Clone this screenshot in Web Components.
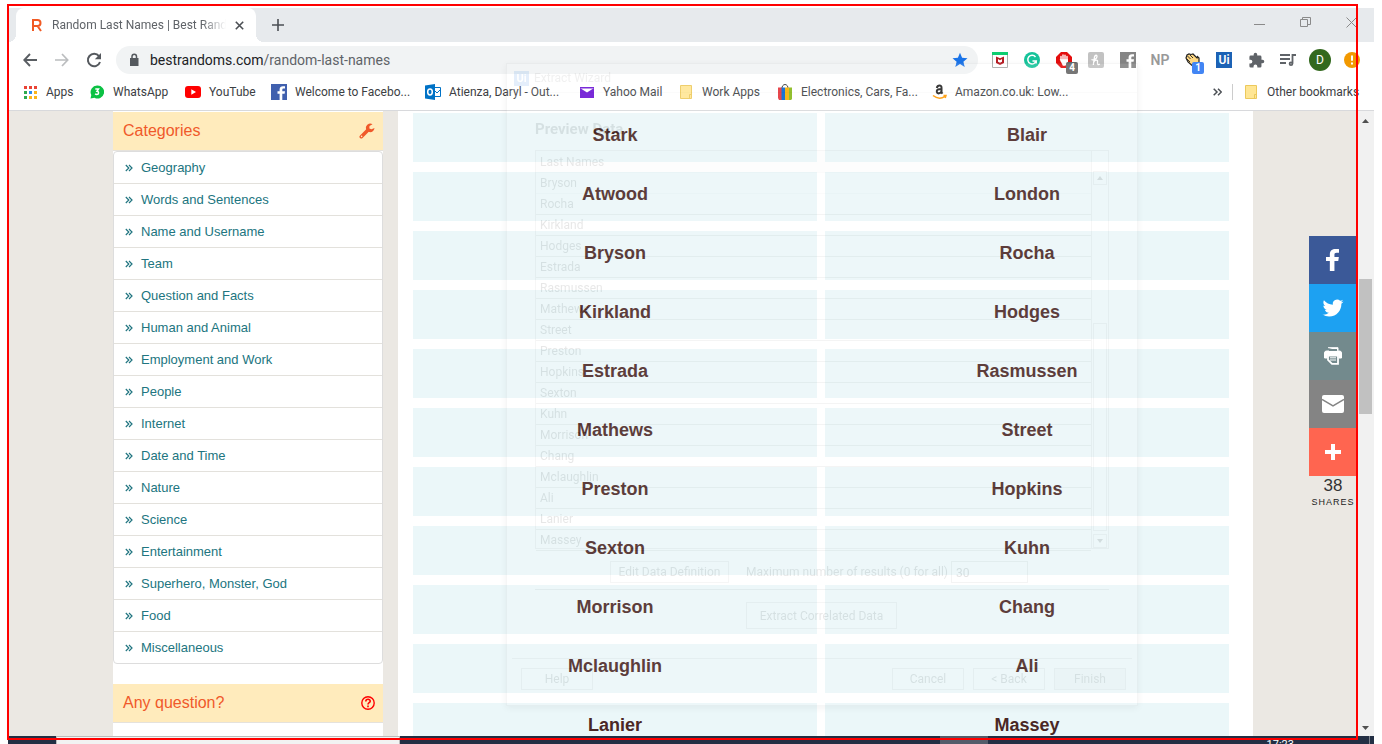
<!DOCTYPE html>
<html lang="en">
<head>
<meta charset="utf-8">
<title>Random Last Names | Best Randoms</title>
<style>
body{margin:0;background:#fff;font-family:Roboto,"Noto Sans",sans-serif;font-size:12px;color:#3c4043}
</style>
</head>
<body>
<desktop-view></desktop-view>
<script>
const BASE = `*,:host{box-sizing:border-box}button{font:inherit;color:inherit;background:none;border:0;padding:0;margin:0}
a{color:inherit;text-decoration:none}ul{list-style:none;margin:0;padding:0}svg{display:block}`;
function define(name, css, html) {
  customElements.define(name, class extends HTMLElement {
    constructor() {
      super();
      const t = document.createElement('template');
      t.innerHTML = `<style>${BASE}${css}</style>${html}`;
      this.attachShadow({ mode: 'open' }).append(t.content.cloneNode(true));
    }
  });
}

define('tab-strip', `
:host{display:flex;height:34px;background:#e7eaed;padding-left:8px;align-items:stretch;flex:none}
.tab{display:flex;align-items:center;width:240px;background:#fff;border-radius:8px 8px 0 0;padding:0 8px 0 13px;position:relative}
.tab::after{content:"";position:absolute;left:100%;bottom:0;width:8px;height:8px;background:radial-gradient(circle at 100% 0,transparent 8px,#fff 8px)}
.tab::before{content:"";position:absolute;right:100%;bottom:0;width:8px;height:8px;background:radial-gradient(circle at 0 0,transparent 8px,#fff 8px)}
.title{flex:1;margin-left:7px;overflow:hidden;white-space:nowrap;color:#5f6368;-webkit-mask-image:linear-gradient(90deg,#000 86%,transparent)}
.tab button{width:17px;height:17px;margin-left:5px;display:grid;place-items:center}
.new{width:28px;margin-left:8px;display:grid;place-items:center}
.ctl{margin-left:auto;display:flex}
.ctl button{width:46px;height:28px;display:grid;place-items:center}`,
`<div class="tab"><svg width="16" height="16" viewBox="0 0 16 16" fill="none" stroke="#f15a24" stroke-width="2"><path d="M4 14V3h4.500a3 3 0 0 1 0 6H4M8.500 9l3.500 5"/></svg>
<span class="title">Random Last Names | Best Randoms</span>
<button aria-label="Close tab"><svg width="9" height="9" viewBox="0 0 9 9" stroke="#4b4f54" stroke-width="1.600"><path d="M.8.8l7.400 7.400M8.200.8L.8 8.200"/></svg></button></div>
<button class="new" aria-label="New tab"><svg width="12" height="12" viewBox="0 0 12 12" stroke="#4b4f54" stroke-width="1.600"><path d="M6 0v12M0 6h12"/></svg></button>
<div class="ctl">
<button aria-label="Minimize"><svg width="11" height="11" stroke="#8a8a8a"><path d="M0 7.500h11"/></svg></button>
<button aria-label="Restore"><svg width="11" height="11" fill="none" stroke="#8a8a8a"><path d="M.5 2.500h7v7h-7zM2.500 2.500v-2h8v7h-3"/></svg></button>
<button aria-label="Close"><svg width="11" height="11" stroke="#8a8a8a"><path d="M.5.5l10 10M10.500.5l-10 10"/></svg></button></div>`);

define('tool-bar', `
:host{display:flex;height:36px;align-items:center;padding:0 6px;background:#fff;flex:none}
button{width:32px;height:32px;display:grid;place-items:center;position:relative;flex:none}
.pill{flex:1;height:28px;margin:0 6px;border-radius:14px;background:#f1f3f4;display:flex;align-items:center;padding-left:11px;min-width:0}
.url{flex:1;margin-left:9px;font-size:14px;white-space:nowrap;color:#5f6368}
.url b{font-weight:400;color:#202124}
.pill button{width:24px;margin-right:6px}
.badge{position:absolute;left:18px;top:18px;min-width:12px;height:12px;border-radius:2px;background:#666;color:#fff;font-size:10px;line-height:12px;font-weight:700;text-align:center}
.blue{background:#4285f4;left:16px}
.sq{width:16px;height:16px;background:#1c62b5;color:#fff;font-size:12px;line-height:16px;font-weight:600}
.np{color:#999;font-size:14px;font-family:Roboto,sans-serif;font-weight:600}
.av{width:22px;height:22px;border-radius:50%;background:#33691e;color:#fff;font-size:12px;line-height:22px}`,
`<button aria-label="Back"><svg width="14" height="14" viewBox="0 0 14 14" fill="none" stroke="#5a5e63" stroke-width="1.900"><path d="M14 7H1.500M7 1L1.300 7 7 13"/></svg></button>
<button aria-label="Forward"><svg width="14" height="14" viewBox="0 0 14 14" fill="none" stroke="#bbbdbf" stroke-width="1.700"><path d="M0 7h12.500M7 1l5.700 6L7 13"/></svg></button>
<button aria-label="Reload"><svg width="16" height="16" viewBox="0 0 16 16"><path d="M13 4.200A6.200 6.200 0 1 0 14 10" fill="none" stroke="#55595e" stroke-width="2"/><path d="M15 1v6.200H8.800z" fill="#55595e"/></svg></button>
<div class="pill"><svg width="14" height="14" viewBox="0 0 14 14"><path d="M3 5h8.500v8H3z" fill="#55595e"/><path d="M5 6V3.500a2.250 2.250 0 0 1 4.500 0V6" fill="none" stroke="#55595e" stroke-width="1.500"/></svg>
<span class="url"><b>bestrandoms.com</b>/random-last-names</span>
<button aria-label="Bookmark"><svg width="16" height="16" viewBox="0 0 16 16"><path d="M8 .8l2.100 5 5.400.4-4.100 3.500 1.300 5.200L8 12.100l-4.700 2.800 1.300-5.200L.5 6.200l5.400-.4z" fill="#1a73e8"/></svg></button></div>
<button aria-label="Web advisor"><svg width="16" height="16" viewBox="0 0 16 16"><path d="M.5 2.500h15v13H.5z" fill="#fff" stroke="#aaa"/><path d="M0 0h16v3H0z" fill="#0fcd71"/><path d="M4 4.500l4 1.800 4-1.800v6.500l-4 2L4 11z" fill="#b81c24"/><path d="M6 7l2 1.200L10 7v2.800l-2 1-2-1z" fill="#fff"/></svg></button>
<button aria-label="Grammar"><svg width="16" height="16" viewBox="0 0 16 16"><circle cx="8" cy="8" r="8" fill="#15c39a"/><path d="M11.500 5A4.300 4.300 0 1 0 12.200 9H8.500M12.200 8.500v3" fill="none" stroke="#fff" stroke-width="1.500"/></svg></button>
<button aria-label="Ad block"><svg width="16" height="16" viewBox="0 0 16 16"><path d="M5 0h6l5 5v6l-5 5H5l-5-5V5z" fill="#e40d0d"/><path d="M5 9V4.500M7 8V3M9 8V3.200M11 9V4.500M4.800 8h6.500v2L9 13H7.300z" fill="#fff" stroke="#fff" stroke-width="1.400" stroke-linecap="round"/></svg><span class="badge">4</span></button>
<button aria-label="Coupons"><svg width="16" height="16" viewBox="0 0 16 16"><rect width="16" height="16" rx="2" fill="#c2c2c2"/><path d="M3.500 7.500C5 8.500 9 7 9 4.500c0-2-2-1.500-2.500.5L5.300 13M6 9.500c1.500-2 4-2 3.500.5-.4 2 .5 3.500 2.300 2" fill="none" stroke="#fff" stroke-width="1.300"/></svg></button>
<button aria-label="Facebook"><svg width="16" height="16" viewBox="0 0 16 16"><path d="M0 0h16v16H0z" fill="#858585"/><path d="M8.600 16V9.800H6.500V7.300h2.100V5.500C8.600 3.300 10 2.200 12 2.200h2v2.400h-1.300c-1 0-1.400.4-1.400 1.300v1.400H14l-.4 2.500h-2.300V16z" fill="#fff"/></svg></button>
<button class="np">NP</button>
<button aria-label="Wave"><svg width="17" height="17" viewBox="0 0 17 17"><path d="M2 6L3 3l2-1 2 .5L9 2l4 4 .5-1.500L15 6v4l-3 4-4-.5-4-3.500z" fill="#ffd882" stroke="#222" stroke-width="1.200"/><path d="M3.500 4l3 3M6 3l3 3M3 7l3 3" stroke="#222" stroke-width=".9"/></svg><span class="badge blue">1</span></button>
<button aria-label="UiPath"><span class="sq">Ui</span></button>
<button aria-label="Extensions"><svg width="17" height="17" viewBox="0 0 24 24"><path d="M20.500 11H19V7a2 2 0 0 0-2-2h-4V3.500a2.500 2.500 0 0 0-5 0V5H4a2 2 0 0 0-2 2v3.800h1.500a2.700 2.700 0 0 1 0 5.400H2V20a2 2 0 0 0 2 2h3.800v-1.500a2.700 2.700 0 0 1 5.400 0V22H17a2 2 0 0 0 2-2v-4h1.500a2.500 2.500 0 0 0 0-5z" fill="#5f6368"/></svg></button>
<button aria-label="Media"><svg width="16" height="14" viewBox="0 0 16 14" fill="none" stroke="#5f6368" stroke-width="1.800"><path d="M0 2h10M0 6h10M0 10h6M16 2h-3.500v8.500"/><circle cx="11" cy="10.800" r="1.400"/></svg></button>
<button aria-label="Profile"><span class="av">D</span></button>
<button aria-label="Update"><svg width="16" height="16" viewBox="0 0 16 16"><circle cx="8" cy="8" r="8" fill="#f29900"/><path d="M8 3.500v5.300M8 10.500v2" stroke="#fff" stroke-width="2"/></svg></button>`);

define('bookmark-item', `
:host{display:block;min-width:0}
a{display:flex;align-items:center;gap:8px;height:28px;white-space:nowrap}
.i{width:16px;height:16px;flex:none;display:grid;place-items:center}`,
`<a href="#"><span class="i"><slot name="icon"></slot></span><slot></slot></a>`);

const folder = `<svg slot="icon" width="12" height="14" viewBox="0 0 12 14"><path d="M.5.5h11v13H.5z" fill="#ffe694" stroke="#ecc95c"/><path d="M9.500 13.500v-4h2" fill="none" stroke="#ecc95c"/></svg>`;
define('bookmarks-bar', `
:host{display:grid;grid-template-columns:67px 96px 86px 154px 154px 99px 99px 154px 1fr 30px 131px;padding:0 0 4px 14px;height:33px;background:#fff;border-bottom:1px solid #d8d9dc;flex:none}
.more{height:28px;display:flex;align-items:center;color:#4b4f54}
.more::after{content:"";height:16px;border-left:1px solid #ccc;margin-left:10px}`,
`<bookmark-item><svg slot="icon" width="13" height="13" viewBox="0 0 13 13"><path d="M0 0h3v3H0zM5 0h3v3H5zM10 0h3v3h-3zM0 5h3v3H0z" fill="#ea4335"/><path d="M5 5h3v3H5z" fill="#2a8cf0"/><path d="M10 5h3v3h-3zM5 10h3v3H5zM10 10h3v3h-3z" fill="#fbb51b"/><path d="M0 10h3v3H0zM0 5h3v3H0z" fill="#2da94f"/></svg>Apps</bookmark-item>
<bookmark-item><svg slot="icon" width="14" height="14" viewBox="0 0 14 14"><path d="M7.500 .5a6.500 6.500 0 1 1-3 12.200L.5 13.500l.8-3.600A6.500 6.500 0 0 1 7.500.5z" fill="#0bc143"/><path d="M5.300 4h3.200L7 6.300c2.300.2 2 3.300-.2 3.200Q5.800 9.500 5.200 8.800" fill="none" stroke="#fff" stroke-width="1.500"/></svg>WhatsApp</bookmark-item>
<bookmark-item><svg slot="icon" width="16" height="12" viewBox="0 0 16 12"><rect width="16" height="12" rx="3" fill="#f00"/><path d="M6.300 3.300v5.400L11 6z" fill="#fff"/></svg>YouTube</bookmark-item>
<bookmark-item><svg slot="icon" width="16" height="16" viewBox="0 0 16 16"><path d="M0 0h16v16H0z" fill="#4060ae"/><path d="M8.600 16V9.800H6.500V7.300h2.100V5.500C8.600 3.300 10 2.200 12 2.200h2v2.400h-1.300c-1 0-1.400.4-1.400 1.300v1.400H14l-.4 2.500h-2.300V16z" fill="#fff"/></svg>Welcome to Facebo...</bookmark-item>
<bookmark-item><svg slot="icon" width="16" height="16" viewBox="0 0 16 16"><path d="M9 3.500h6.500v9H9M9 6l3 3 3.500-3.500" fill="#fff" stroke="#0072c6"/><path d="M0 1.500L10 0v16L0 14.500z" fill="#0072c6"/><ellipse cx="5" cy="8" rx="2.300" ry="2.900" fill="none" stroke="#fff" stroke-width="1.500"/></svg>Atienza, Daryl - Out...</bookmark-item>
<bookmark-item><svg slot="icon" width="14" height="11" viewBox="0 0 14 11"><path d="M0 0h14v11H0z" fill="#6a12d4"/><path d="M0 1l7 4.500L14 1V0H0z" fill="#fff"/><path d="M0 0h14v1.500H0z" fill="#6a12d4"/></svg>Yahoo Mail</bookmark-item>
<bookmark-item>${folder}Work Apps</bookmark-item>
<bookmark-item><svg slot="icon" width="14" height="16" viewBox="0 0 14 16"><path d="M4 5C3.500-1 10.500-1 10 5" fill="none" stroke="#333"/><path d="M0 3.500h4V16H1L0 14z" fill="#e53238"/><path d="M3.500 3.500H7V16H3.500z" fill="#0064d2"/><path d="M7 3.500h4V16H7z" fill="#f5af02"/><path d="M11 3.500h3V15l-1 1h-2z" fill="#86b817"/></svg>Electronics, Cars, Fa...</bookmark-item>
<bookmark-item><svg slot="icon" width="15" height="16" viewBox="0 0 15 16"><path d="M4.800 4C5.500.8 10 .8 9.500 4v4.500l1 1.200M9.500 5C6 5 4.500 6 4.800 7.800c.4 2.400 4.200 2 4.700-1" fill="none" stroke="#222" stroke-width="2"/><path d="M1 11.500c4 3.200 8.500 3.200 12 .8M11.500 11.500h2.500l-.8 2.500" fill="none" stroke="#f90" stroke-width="1.500"/></svg>Amazon.co.uk: Low...</bookmark-item>
<button class="more" aria-label="More bookmarks"><svg width="9" height="8" viewBox="0 0 9 8" fill="none" stroke="#4b4f54" stroke-width="1.500"><path d="M.7.7L4 4 .7 7.300M5 .7L8.300 4 5 7.300"/></svg></button>
<bookmark-item>${folder}Other bookmarks</bookmark-item>`);

define('side-panel', `
:host{display:block;font-family:"Liberation Sans",Arial,sans-serif;color:#f0592a}
header{display:flex;justify-content:space-between;align-items:center;height:39px;padding:0 8px 0 10px;background:#ffebbc;border-bottom:1px solid #e5e2dc}
h2{font-size:16px;font-weight:400;margin:0}`,
`<header><h2><slot name="title"></slot></h2><slot name="icon"></slot></header><slot></slot>`);

define('category-list', `
:host{display:block;margin:0 0 20px;font:13px/18px "Liberation Sans",Arial,sans-serif;color:#217580}
ul{border:1px solid #ddd;border-radius:4px}
li{height:32px;border-bottom:1px solid #e3e1dc}
li:last-child{height:31px;border:0}
a{display:flex;align-items:center;gap:8px;height:31px;padding-left:11px}`,
`<ul>${['Geography','Words and Sentences','Name and Username','Team','Question and Facts','Human and Animal','Employment and Work','People','Internet','Date and Time','Nature','Science','Entertainment','Superhero, Monster, God','Food','Miscellaneous'].map(t=>`<li><a href="#"><svg width="8" height="8" viewBox="0 0 8 8" fill="none" stroke="#217580" stroke-width="1.200"><path d="M.8 1L3.800 4 .8 7M4 1l3 3-3 3"/></svg>${t}</a></li>`).join('')}</ul>`);

define('name-grid', `
:host{display:block;padding:2px 24px 0 15px;background:#fff;flex:1;min-width:0}
ul{display:grid;grid-template-columns:1fr 1fr;gap:10px 8px;font:bold 18px/44px "Liberation Sans",Arial,sans-serif;color:#4a2725;text-align:center}
li{height:49px;background:#ebf7f9}`,
`<ul>${['Stark','Blair','Atwood','London','Bryson','Rocha','Kirkland','Hodges','Estrada','Rasmussen','Mathews','Street','Preston','Hopkins','Sexton','Kuhn','Morrison','Chang','Mclaughlin','Ali','Lanier','Massey'].map(t=>`<li>${t}</li>`).join('')}</ul>`);

define('share-rail', `
:host{display:block;width:48px;font-family:"Liberation Sans",Arial,sans-serif;text-align:center;color:#333}
button{width:48px;height:48px;display:grid;place-items:center}
.n{font-size:17px;line-height:20px}
.s{font-size:9px;line-height:12px;letter-spacing:1px;color:#222}`,
`<button aria-label="Facebook" style="background:#3b5998"><svg width="32" height="32" viewBox="0 0 32 32" fill="#fff"><path d="M22 5.160c-.406-.054-1.806-.16-3.430-.16-3.400 0-5.733 1.825-5.733 5.170v2.882H9v3.913h3.837V27h4.604V16.965h3.823l.587-3.913h-4.410v-2.500c0-1.123.347-1.903 2.198-1.903H22V5.160z"/></svg></button>
<button aria-label="Twitter" style="background:#1da1f2"><svg width="28" height="28" viewBox="0 0 32 32" fill="#fff"><path d="M28 8.557a9.913 9.913 0 0 1-2.828.775 4.930 4.930 0 0 0 2.166-2.725 9.738 9.738 0 0 1-3.130 1.194 4.920 4.920 0 0 0-3.593-1.550 4.924 4.924 0 0 0-4.794 6.049c-4.090-.21-7.720-2.170-10.150-5.150a4.942 4.942 0 0 0-.665 2.477c0 1.710.870 3.214 2.190 4.100a4.968 4.968 0 0 1-2.230-.616v.06c0 2.390 1.700 4.380 3.952 4.830-.414.115-.850.174-1.297.174-.318 0-.626-.030-.928-.086a4.935 4.935 0 0 0 4.600 3.420 9.893 9.893 0 0 1-6.114 2.107c-.398 0-.790-.023-1.175-.068a13.953 13.953 0 0 0 7.550 2.213c9.056 0 14.010-7.507 14.010-14.013 0-.213-.005-.426-.015-.637.960-.695 1.795-1.560 2.455-2.550z"/></svg></button>
<button aria-label="Print" style="background:#738a8d"><svg width="20" height="20" viewBox="0 0 20 20"><path d="M5 1.700h10v3M1.500 12V7q0-2 2-2h13q2 0 2 2v5H16V9H4v3z" fill="#fff" stroke="#fff" stroke-width="1"/><path d="M6 3h8v2H6z" fill="#738a8d"/><path d="M5 9.500h10v8.300H9l-4-4z" fill="#738a8d" stroke="#fff" stroke-width="1.800"/><path d="M7 11.800h6M7 14h6" stroke="#fff"/></svg></button>
<button aria-label="Email" style="background:#848484"><svg width="22" height="18" viewBox="0 0 22 18"><rect width="22" height="18" rx="2" fill="#fff"/><path d="M0 4.500l11 6.500 11-6.500" fill="none" stroke="#848484" stroke-width="1.500"/></svg></button>
<button aria-label="More" style="background:#ff6550"><svg width="16" height="16" stroke="#fff" stroke-width="4"><path d="M8 0v16M0 8h16"/></svg></button>
<div class="n">38</div><div class="s">SHARES</div>`);

define('page-scrollbar', `
:host{display:flex;flex-direction:column;align-items:center;width:17px;background:#f1f1f1;flex:none;padding:8px 0 6px}
.t{width:13px;flex:135;background:#c1c1c1}.a{flex:156}.b{flex:312}`,
`<svg width="7" height="4"><path d="M0 4h7L3.500 0z" fill="#505050"/></svg><div class="a"></div><div class="t"></div><div class="b"></div><svg width="7" height="4"><path d="M0 0h7L3.500 4z" fill="#505050"/></svg>`);

define('task-bar', `
:host{display:flex;height:8px;background:#232f44;overflow:hidden;flex:none;color:#fff}
.s{margin-left:48px;width:344px;background:#f2f2f2;border:solid #bbb;border-width:1px 1px 0}
.h{margin-left:540px;width:48px;background:#545c6a}
time{margin:0 75px 0 auto;font-size:11px;line-height:18px}
i{width:1px;background:#7c838e;margin-right:4px}`,
`<div class="s"></div><div class="h"></div><time>17:23</time><i></i>`);

define('extract-wizard', `
:host{display:block;width:632px;height:643px;background:#fff;border:1px solid #aaa;box-shadow:0 2px 7px rgba(0,0,0,.5);opacity:.1;color:#222;font-size:12px}
.bar{height:29px;display:flex;align-items:center;gap:5px;padding-left:7px;color:#777;border-bottom:1px solid #ddd}
.ui{width:15px;height:15px;background:#0067df;color:#fff;font-weight:700;font-size:11px;line-height:15px;text-align:center}
.body{padding:24px 28px 0 28px}
h1{font-size:15px;line-height:24px;margin:0 0 9px}
.grid{display:flex;border:1px solid #aaa;height:399px}
table{flex:1;border-collapse:collapse}
th,td{height:21px;padding:1px 4px 0;text-align:left;font-weight:400;line-height:18px;border-bottom:1px solid #999}
th{background:#f0f0f0}th,tr:first-child td{border-color:#ddd}
.sb{width:17px;border-left:1px solid #aaa;padding:20px 1px 0;display:flex;flex-direction:column;justify-content:space-between}
.sb span{height:14px;border:1px solid #aaa;display:grid;place-items:center}
.sb .th{height:208px;margin:138px 0 auto}
.row{display:flex;align-items:center;padding:12px 0 6px 75px;border-bottom:1px solid #888}
.row label{width:205px;margin:0 0 0 17px;white-space:nowrap}
input{width:77px;height:22px;border:1px solid #999;font:inherit;padding:1px 4px 0}
button{height:22px;border:1px solid #aaa;width:72px}
.row button{width:119px}
.x{display:block;width:151px;height:27px;margin:12px 0 29px 211px}
footer{display:flex;gap:9px;margin:0 5px;padding:9px 6px 0 9px;border-top:1px solid #aaa}
footer button:first-child{margin-right:auto}
footer button:last-child{background:#e4e4e4}`,
`<div class="bar"><span class="ui">Ui</span><span>Extract Wizard</span></div>
<div class="body"><h1>Preview Data</h1><div class="grid"><table><thead><tr><th>Last Names</th></tr></thead><tbody>${['Bryson','Rocha','Kirkland','Hodges','Estrada','Rasmussen','Mathews','Street','Preston','Hopkins','Sexton','Kuhn','Morrison','Chang','Mclaughlin','Ali','Lanier','Massey'].map(t=>`<tr><td>${t}</td></tr>`).join('')}</tbody></table>
<div class="sb"><span><svg width="6" height="4"><path d="M0 4h6L3 0z"/></svg></span><span class="th"></span><span><svg width="6" height="4"><path d="M0 0h6L3 4z"/></svg></span></div></div>
<div class="row"><button>Edit Data Definition</button><label for="max">Maximum number of results (0 for all)</label><input id="max" value="30"></div>
<button class="x">Extract Correlated Data</button></div>
<footer><button>Help</button><button>Cancel</button><button>&lt; Back</button><button>Finish</button></footer>`);

define('desktop-view', `
:host{display:block;position:relative;height:100vh;overflow:hidden;padding:8px 8px 0}
.win{display:flex;flex-direction:column;height:100%}
.view{flex:1;min-height:0;display:flex;position:relative;overflow:hidden;background:#ebe8e3}
.page{flex:1;min-width:0;display:flex;padding:0 104px 0 105px;gap:15px}
aside{width:270px;background:#fff;padding-top:1px;flex:none}
share-rail{position:absolute;right:17px;top:125px}
extract-wizard{position:absolute;left:506px;top:63px}
.frame{position:absolute;inset:4px 24px 4px 7px;border:2px solid #f00;pointer-events:none}`,
`<div class="win"><tab-strip></tab-strip><tool-bar></tool-bar><bookmarks-bar></bookmarks-bar>
<div class="view"><div class="page"><aside>
<side-panel><span slot="title">Categories</span><svg slot="icon" width="16" height="16" viewBox="0 0 16 16"><path d="M2.300 13.700L9 7" stroke="#f0592a" stroke-width="3.600" stroke-linecap="round"/><path d="M13.500 1.200A4.300 4.300 0 1 0 15.500 5L12.500 6.300 10.300 5.500 10.500 3z" fill="#f0592a"/><circle cx="2.600" cy="13.400" r=".8" fill="#ffebbc"/></svg>
<category-list></category-list></side-panel>
<side-panel><span slot="title">Any question?</span><svg slot="icon" width="14" height="14" viewBox="0 0 14 14" fill="none" stroke="red"><circle cx="7" cy="7" r="6.200" stroke-width="1.400"/><path d="M4.800 5.500c0-3 4.700-2.800 4.400-.2C9 6.700 7 6.600 7 8.400M7 9.500v1.700" stroke-width="1.600"/></svg></side-panel>
</aside><name-grid></name-grid></div><page-scrollbar></page-scrollbar><share-rail></share-rail></div>
<task-bar></task-bar></div>
<extract-wizard></extract-wizard><div class="frame"></div>`);
</script>
</body>
</html>
